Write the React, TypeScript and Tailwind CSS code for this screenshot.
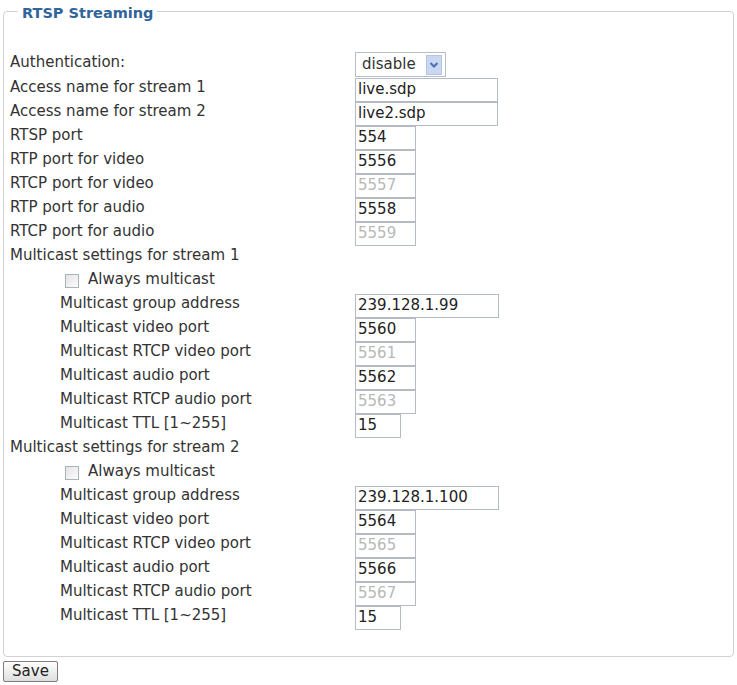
import React from "react";

type Row =
  | { kind: "select"; label: string; value: string }
  | { kind: "input"; label: string; value: string; width: number; disabled?: boolean; indent?: boolean }
  | { kind: "text"; label: string }
  | { kind: "check"; label: string };

const streamBlock = (n: number, group: string, base: number): Row[] => [
  { kind: "text", label: `Multicast settings for stream ${n}` },
  { kind: "check", label: "Always multicast" },
  { kind: "input", label: "Multicast group address", value: group, width: 144, indent: true },
  { kind: "input", label: "Multicast video port", value: String(base), width: 61, indent: true },
  { kind: "input", label: "Multicast RTCP video port", value: String(base + 1), width: 61, disabled: true, indent: true },
  { kind: "input", label: "Multicast audio port", value: String(base + 2), width: 61, indent: true },
  { kind: "input", label: "Multicast RTCP audio port", value: String(base + 3), width: 61, disabled: true, indent: true },
  { kind: "input", label: "Multicast TTL [1~255]", value: "15", width: 46, indent: true },
];

const rows: Row[] = [
  { kind: "select", label: "Authentication:", value: "disable" },
  { kind: "input", label: "Access name for stream 1", value: "live.sdp", width: 143 },
  { kind: "input", label: "Access name for stream 2", value: "live2.sdp", width: 143 },
  { kind: "input", label: "RTSP port", value: "554", width: 61 },
  { kind: "input", label: "RTP port for video", value: "5556", width: 61 },
  { kind: "input", label: "RTCP port for video", value: "5557", width: 61, disabled: true },
  { kind: "input", label: "RTP port for audio", value: "5558", width: 61 },
  { kind: "input", label: "RTCP port for audio", value: "5559", width: 61, disabled: true },
  ...streamBlock(1, "239.128.1.99", 5560),
  ...streamBlock(2, "239.128.1.100", 5564),
];

function Chevron() {
  return (
    <svg width="10" height="8" viewBox="0 0 10 8" aria-hidden>
      <path d="M1.5 2 L5 5.5 L8.5 2" fill="none" stroke="#4a6fb0" strokeWidth="2" />
    </svg>
  );
}

function Label({ text, indent }: { text: string; indent?: boolean }) {
  return (
    <div className={`w-[345px] shrink-0 pb-[6px] whitespace-nowrap ${indent ? "pl-[50px]" : ""}`}>
      {text}
    </div>
  );
}

function FieldRow({ row }: { row: Row }) {
  if (row.kind === "select") {
    return (
      <div className="flex h-[26px] items-start">
        <div className="w-[345px] shrink-0 pt-[1px] whitespace-nowrap">{row.label}</div>
        <div className="flex h-[25px] w-[91px] items-center justify-between border border-[#b7bdc6] bg-white pl-[6px] pr-[3px]">
          <span className="pb-[2px]">{row.value}</span>
          <span className="flex h-[20px] w-[16px] items-center justify-center border border-[#b3c5e4] bg-[#c9d8f0]">
            <Chevron />
          </span>
        </div>
      </div>
    );
  }
  if (row.kind === "text") {
    return (
      <div className="flex h-6 items-center">
        <Label text={row.label} />
      </div>
    );
  }
  if (row.kind === "check") {
    return (
      <div className="flex h-6 items-center pl-[55px]">
        <span className="mr-[9px] mb-[2px] h-[14px] w-[14px] border border-[#a9b1bb] bg-gradient-to-br from-[#e4e4e4] to-[#fbfbfb]" />
        <span className="pb-[6px]">{row.label}</span>
      </div>
    );
  }
  return (
    <div className="flex h-6 items-center">
      <Label text={row.label} indent={row.indent} />
      <div
        className={`flex h-6 items-center border border-[#b4bbc4] bg-white pl-[2px] pb-[2px] ${
          row.disabled ? "text-[#b8b8b8]" : "text-[#222]"
        }`}
        style={{ width: row.width }}
      >
        {row.value}
      </div>
    </div>
  );
}

export default function App() {
  return (
    <div className="min-h-[685px] bg-white px-[3px] font-['DejaVu_Sans',sans-serif] text-[15px] leading-[18px] text-[#333]">
      <fieldset className="w-[731px] rounded-[4px] border border-[#d2d2d2] px-[6px] pt-[30px] pb-[26px]">
        <legend className="ml-[8px] px-[4px] text-[14.5px] font-bold leading-[22px] text-[#30649a]">
          <span className="relative top-[2px]">RTSP Streaming</span>
        </legend>
        <div className="flex flex-col">
          {rows.map((r, i) => (
            <FieldRow key={i} row={r} />
          ))}
        </div>
      </fieldset>
      <button className="mt-[4px] flex h-[21px] w-[55px] items-center justify-center rounded-[2px] border border-[#7d7d7d] bg-gradient-to-b from-white to-[#dedede] pb-[2px] text-[15px] text-[#222]">
        Save
      </button>
    </div>
  );
}
